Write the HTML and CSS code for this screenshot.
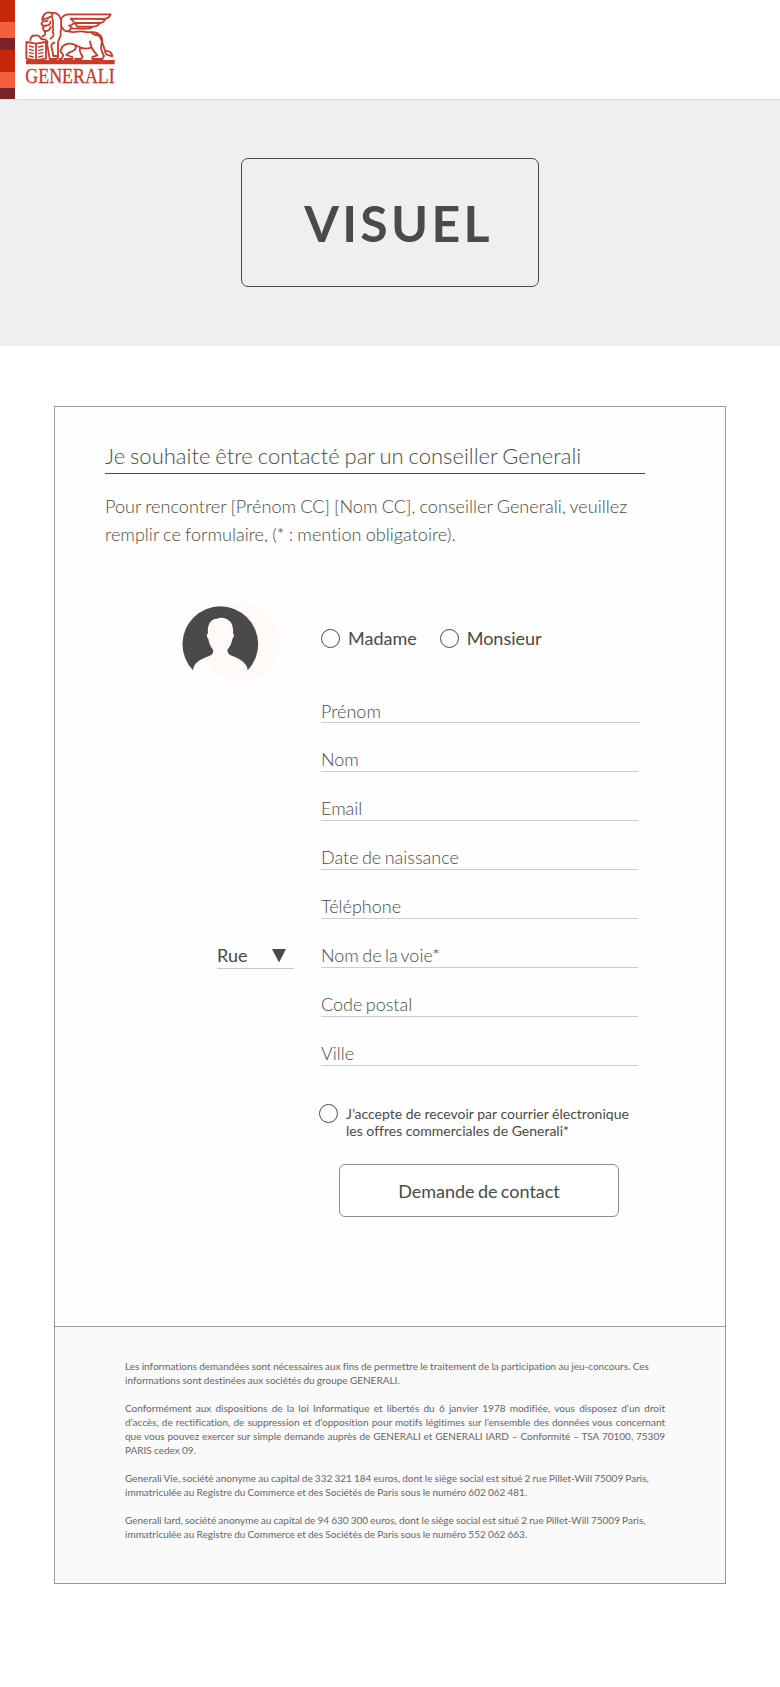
FILE: index.html
```html
<!DOCTYPE html>
<html lang="fr">
<head>
<meta charset="utf-8">
<title>Generali – Contact</title>
<link rel="stylesheet" href="styles.css">
</head>
<body>
<header class="header">
  <div class="stripes"><i class="red"></i><i class="orange"></i><i class="dark"></i><i class="red"></i><i class="orange"></i><i class="dark"></i></div>
  <svg class="logo" viewBox="66 30 291 246" width="97" height="82" role="img" aria-label="Generali">
    <g fill="none" stroke="#cb3a29" stroke-width="5.400" stroke-linejoin="round" stroke-linecap="round">
      <path d="M78 186.500H344" stroke-width="13" stroke-linecap="butt"/>
      <path d="M79 126L108 131L138 126V176L108 181L79 176ZM108 131V181"/>
      <path d="M88 138l12 3M88 148l12 3M88 158l12 3M88 168l12 3M116 141l13-3M116 151l13-3M116 161l13-3M116 171l13-3" stroke-width="4"/>
      <path d="M91 121C91 111 98 105 105 107C113 104 120 110 124 117L135 119C144 121 144 129 140 134"/>
      <path d="M129 50C134 39 145 35 155 39C168 36 179 45 182 56C187 64 181 70 184 78C186 87 179 92 182 101C184 112 174 117 174 130V171L170 177H149L142 136"/>
      <path d="M129 50L126 57L131 61L124 71L127 76L137 77L128 82L131 91C141 97 150 89 152 81M130 58C139 53 145 57 151 50M135 64L143 62M138 77C147 77 151 70 152 65M132 92C140 101 135 107 127 109M157 42C151 53 163 60 159 70C155 80 164 88 158 96M158 96C164 102 160 111 151 116"/>
      <path d="M163 128C153 130 153 139 156 147L160 168H172"/>
      <path d="M183 57C189 46 195 43 206 43H332C329 52 322 56 313 57L212 56M212 56L224 69H302C310 67 314 62 316 57M224 69L213 75M224 69L232 80H280C291 79 297 74 299 69M207 76L219 86H258C268 86 275 84 278 80"/>
      <path d="M184 79C190 91 198 97 208 92L213 86M208 95C226 100 239 91 252 95C268 100 279 92 291 99C307 107 309 122 304 136C300 150 307 157 312 168L307 177H277V171L292 166L280 151C273 143 272 134 270 124"/>
      <path d="M272 143C258 149 240 144 228 136C214 127 196 130 187 140L181 153L190 166L184 177H177M226 136C231 148 221 154 208 157L199 165L217 171V177H193M240 142C238 152 240 160 248 169L244 177H225"/>
      <path d="M274 97C281 108 291 104 302 108M291 99C308 114 308 139 316 154M315 154C326 151 337 158 337 168C326 166 317 167 315 154Z"/>
    </g>
    <text class="logo-text" x="76" y="250" textLength="268" lengthAdjust="spacingAndGlyphs">GENERALI</text>
  </svg>
</header>
<section class="hero"><div class="visual">VISUEL</div></section>
<main class="card">
  <section class="contact">
    <h1 class="title">Je souhaite être contacté par un conseiller Generali</h1>
    <p class="intro">Pour rencontrer [Prénom CC] [Nom CC], conseiller Generali, veuillez<br>remplir ce formulaire, (* : mention obligatoire).</p>
    <form class="form">
      <div class="side">
        <svg class="avatar" width="104" height="80" viewBox="0 0 312 240">
          <circle cx="191" cy="120" r="119" fill="#fff9f8"/>
          <path d="M48 205A113.500 113.500 0 1 1 212 205C211 182 187 170 166 162C153 157 150 150 152 142C160 133 164 123 166 111C172 103 172 96 168 95C171 67 159 47 131 47C124 47 122 51 117 50C99 53 90 70 93 95C88 95 88 104 94 111C96 123 100 133 107 142C111 150 108 157 97 162C75 170 50 180 48 205Z" fill="#4a4a4a"/>
        </svg>
        <div class="select"><span>Rue</span><svg width="14" height="14" viewBox="0 0 14 14"><path d="M0 0H14L7 13.500Z" fill="#4a4a4a"/></svg></div>
      </div>
      <div class="fields">
        <div class="radios">
          <label class="choice"><i class="radio"></i><span>Madame</span></label>
          <label class="choice"><i class="radio"></i><span>Monsieur</span></label>
        </div>
        <div class="field first">Prénom</div>
        <div class="field">Nom</div>
        <div class="field">Email</div>
        <div class="field">Date de naissance</div>
        <div class="field">Téléphone</div>
        <div class="field">Nom de la voie*</div>
        <div class="field">Code postal</div>
        <div class="field">Ville</div>
        <label class="consent"><i class="radio"></i><span>J’accepte de recevoir par courrier électronique<br>les offres commerciales de Generali*</span></label>
        <button class="submit" type="button">Demande de contact</button>
      </div>
    </form>
  </section>
  <footer class="legal">
    <p>Les informations demandées sont nécessaires aux fins de permettre le traitement de la participation au jeu-concours. Ces<br>informations sont destinées aux sociétés du groupe GENERALI.</p>
    <p class="justified">Conformément aux dispositions de la loi Informatique et libertés du 6 janvier 1978 modifiée, vous disposez d’un droit d’accès, de rectification, de suppression et d’opposition pour motifs légitimes sur l’ensemble des données vous concernant que vous pouvez exercer sur simple demande auprès de GENERALI et GENERALI IARD – Conformité – TSA 70100, 75309 PARIS cedex 09.</p>
    <p class="company">Generali Vie, société anonyme au capital de 332 321 184 euros, dont le siège social est situé 2 rue Pillet-Will 75009 Paris,<br>immatriculée au Registre du Commerce et des Sociétés de Paris sous le numéro 602 062 481.</p>
    <p class="company">Generali Iard, société anonyme au capital de 94 630 300 euros, dont le siège social est situé 2 rue Pillet-Will 75009 Paris,<br>immatriculée au Registre du Commerce et des Sociétés de Paris sous le numéro 552 062 663.</p>
  </footer>
</main>
</body>
</html>
```
FILE: styles.css
```css
* { box-sizing: border-box; }
body { margin: 0; min-height: 1687px; background: #fff; color: #4a4a4a; font-family: Lato, sans-serif; font-variant-ligatures: none; }
.header { display: flex; height: 100px; border-bottom: 1px solid #dcdcdc; }
.stripes { display: grid; width: 15px; grid-template-rows: 22px 16px 12px 22px 16px 11px; }
.red { background: #c8280a; }
.orange { background: #f55f3b; }
.dark { background: #7a2428; }
.logo { margin: 10px 0 0 7px; overflow: visible; }
.logo-text { font-family: "Liberation Serif", serif; font-size: 65px; fill: #cb3a29; stroke: #cb3a29; stroke-width: 1; }
.hero { height: 246px; background: #efefef; padding-top: 58px; }
.visual { width: 298px; height: 129px; margin: 0 auto; padding-left: 17px; border: 1px solid #4a4a4a; border-radius: 7px; font-size: 50px; font-weight: 700; letter-spacing: 3.3px; line-height: 128px; text-align: center; }
.card { width: 672px; height: 1178px; margin: 60px 0 0 54px; border: 1px solid #999; background: #fefefe; }
.contact { height: 919px; padding: 34px 80px 0 50px; }
.title { margin: 0; height: 33px; border-bottom: 1px solid #4a4a4a; font-size: 22px; font-weight: 300; line-height: 30px; word-spacing: -1.1px; white-space: nowrap; }
.intro { margin: 18px 0 0; font-size: 18.1px; font-weight: 300; line-height: 28px; word-spacing: -.7px; white-space: nowrap; }
.form { display: grid; grid-template-columns: 216px 1fr; margin-top: 54px; }
.side { padding-left: 62px; }
.avatar { display: block; margin-left: 10px; }
.select { display: flex; justify-content: space-between; align-items: center; width: 77px; height: 26px; margin: 261px 0 0 50px; padding-right: 8px; border-bottom: 1px solid #c8c8c8; font-size: 18px; }
.select span { padding-bottom: 2px; }
.radios { display: flex; gap: 23px; margin-top: 27px; height: 19px; }
.choice { display: flex; align-items: center; gap: 8px; font-size: 18px; line-height: 20px; }
.choice span { padding-bottom: 2px; }
.radio { flex: none; width: 19px; height: 19px; border: 1px solid #4a4a4a; border-radius: 50%; }
.field { width: 317px; height: 25px; margin-top: 24px; border-bottom: 1px solid #ccc; font-size: 18px; font-weight: 300; line-height: 25px; word-spacing: -1.5px; white-space: nowrap; }
.first { width: 319px; margin-top: 50px; line-height: 27px; }
.consent { display: flex; gap: 8px; margin: 38px 0 0 -2px; font-size: 14px; line-height: 17px; white-space: nowrap; }
.consent span { padding-top: 1px; }
.submit { display: block; width: 280px; height: 53px; margin: 25px 0 0 18px; border: 1px solid #8c8c8c; border-radius: 6px; background: #fff; color: #4a4a4a; font: 18px Lato, sans-serif; word-spacing: -1.3px; }
.legal { height: 257px; padding: 32px 60px 0 70px; border-top: 1px solid #999; background: #fafafa; color: #666; font-size: 10px; line-height: 14px; }
.legal p { margin: 0 0 14px; word-spacing: -.3px; white-space: nowrap; }
.legal .company { word-spacing: -.4px; }
.legal .justified { white-space: normal; text-align: justify; }
```
